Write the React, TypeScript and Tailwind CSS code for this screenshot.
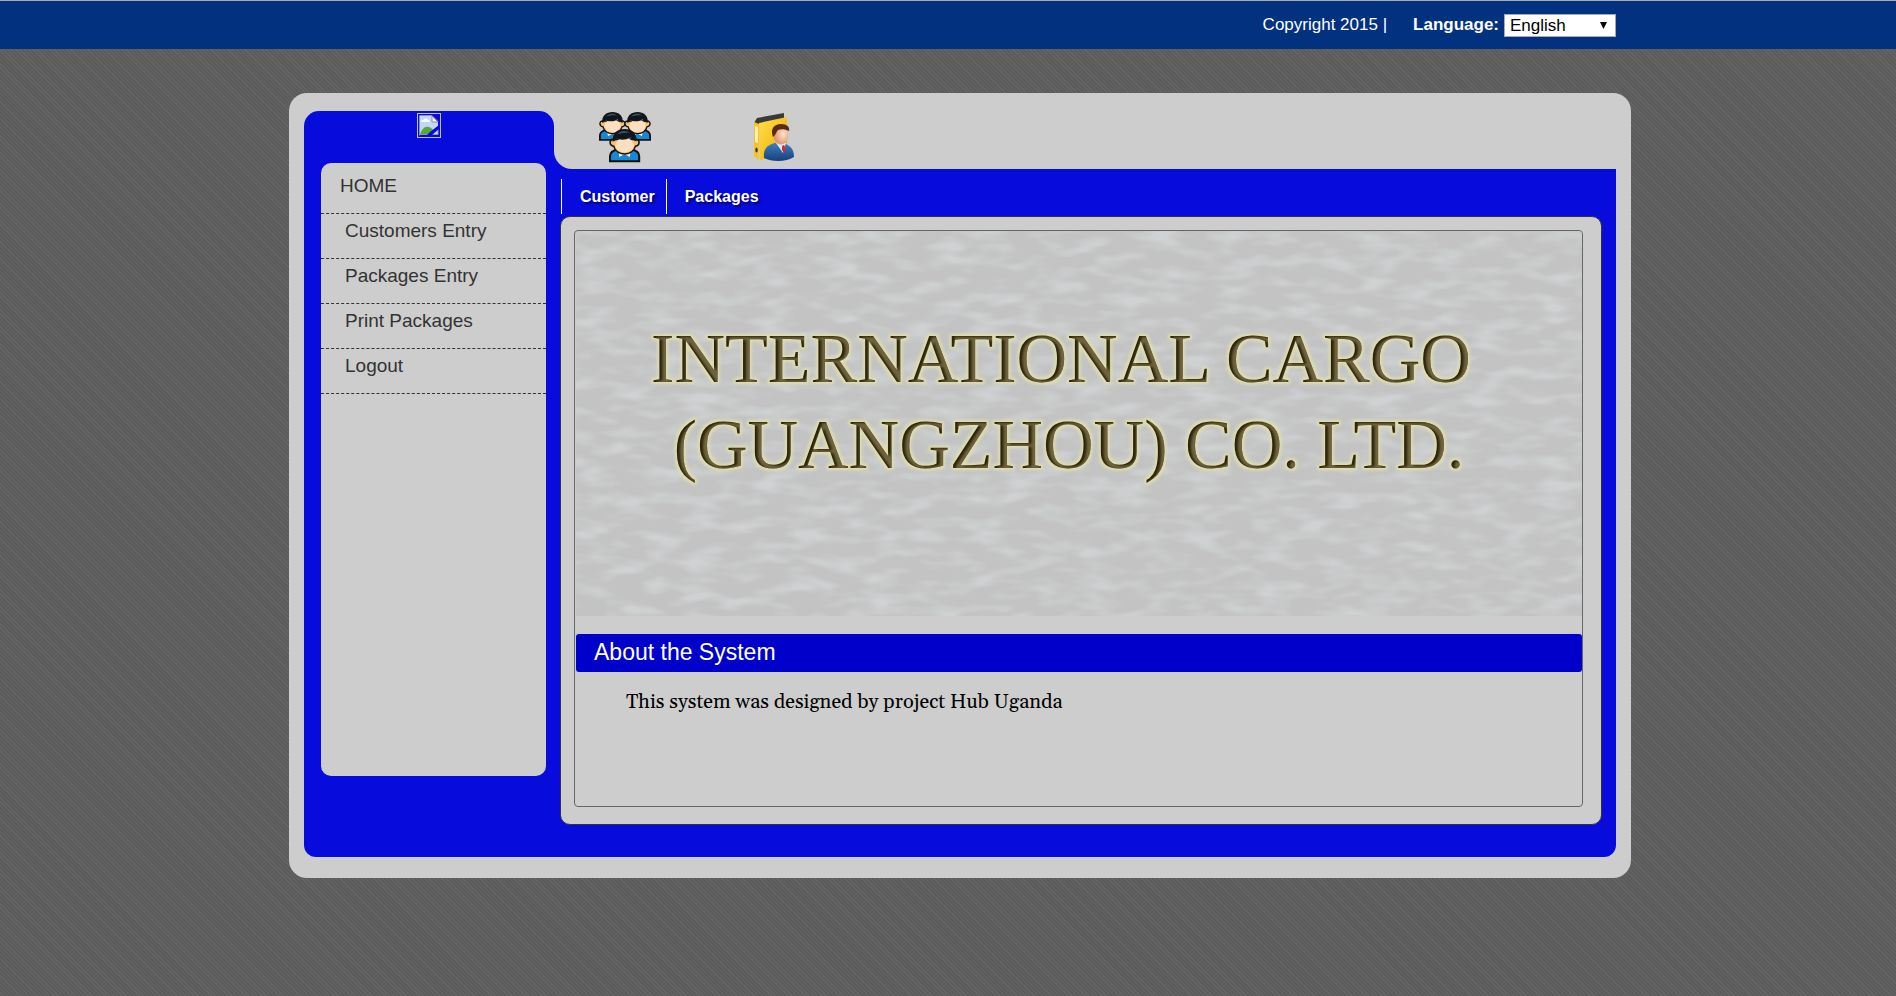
import { ReactNode } from "react";

const navItems = ["Customers Entry", "Packages Entry", "Print Packages", "Logout"];

function BrokenImageIcon() {
  return (
    <svg viewBox="0 0 24 25" className="h-[25px] w-6" role="img" aria-label="Logo">
      <rect x="0.5" y="0.5" width="23" height="24" fill="none" stroke="#c0c0c0" />
      <path d="M3 3h12l6 6v13H3z" fill="#c3d6f5" />
      <path d="M4 9c0-2 2-2 2.500-2 .5-2 4-2 4.500 0 2 0 2 2 2 2z" fill="#fff" />
      <path d="M3 21c2-5 5-8 8-7 3 0 4 2 5 3l-5 5H3z" fill="#55aa35" />
      <path d="M2.500 22.500v-20H15l6 6" fill="none" stroke="#8f9499" />
      <path d="M15 3v6h6z" fill="#f4f6fa" stroke="#8f9499" />
      <path d="M3 21.500h8M15 21.500h6V16" fill="none" stroke="#8f9499" />
      <path d="M10 22l3-3 9-7v4l-7 6z" fill="#070cdc" />
    </svg>
  );
}

function Person({ x, y, s }: { x: number; y: number; s: number }) {
  return (
    <g transform={`translate(${x} ${y}) scale(${s})`}>
      <path d="M1 31v-5c0-4 3-5.500 8-6.500h12c5 1 8 2.500 8 6.500v5z" fill="#1689d6" stroke="#111" strokeWidth="2" />
      <path d="M9 20l1 7 5-3 5 3 1-7-2-3h-8z" fill="#fff" />
      <path d="M11 18h8l-4 7z" fill="#f5b86f" />
      <path d="M4 10C0 10 0 16 4.500 16.500 6 22 11 24 15 24s9-2 10.500-7.500C30 16 30 10 26 10z" fill="#f9bd74" stroke="#111" strokeWidth="1.500" />
      <ellipse cx="15" cy="15.500" rx="9" ry="7" fill="#fee0c0" />
      <path d="M3.500 12C3 4 8 0 15 0s12 4 11.500 12c-3-1-5-2-6-4-4 3-10 3-13 1-1 2-2 3-4 3z" fill="#10171c" />
      <path d="M8 5c3-4 9-4 12-1-4-1-8 0-12 1z" fill="#3b5361" />
    </g>
  );
}

function CustomersIcon() {
  return (
    <svg viewBox="0 0 52 52" className="size-[52px]" aria-hidden="true">
      <Person x={0} y={1} s={0.9} />
      <Person x={25} y={1} s={0.9} />
      <Person x={10} y={18} s={1.04} />
    </svg>
  );
}

function PackagesIcon() {
  return (
    <svg viewBox="0 0 42 50" className="h-[50px] w-[42px]" aria-hidden="true">
      <defs>
        <linearGradient id="folder" x1="0" y1="0" x2="1" y2="1">
          <stop offset="0" stopColor="#ffe04a" />
          <stop offset="1" stopColor="#eda900" />
        </linearGradient>
        <linearGradient id="suit" x1="0" y1="0" x2="0" y2="1">
          <stop offset="0" stopColor="#3d7fc0" />
          <stop offset="1" stopColor="#164178" />
        </linearGradient>
        <radialGradient id="face" cx="0.65" cy="0.45" r="0.6">
          <stop offset="0" stopColor="#ffe3cf" />
          <stop offset="1" stopColor="#dd9468" />
        </radialGradient>
      </defs>
      <path d="M1 11l3-5 27-5v5L6 13z" fill="#3a3a3a" />
      <path d="M6 11l28-6v36L7 48z" fill="url(#folder)" />
      <path d="M1 10l5 2v36l-5-4z" fill="#f7c31c" />
      <path d="M2 14l3 1v16l-3-1z" fill="#fff2c0" />
      <ellipse cx="3.500" cy="38" rx="1.200" ry="2.500" fill="#333" />
      <path d="M11 46c-1-9 3-13 11-15h8c7 2 11 6 11 14-8 5-22 5-30 1z" fill="url(#suit)" />
      <path d="M23 31l7 10 3-10z" fill="#dfe7f3" />
      <path d="M29 34l2-1 2 4-2 4-2-3z" fill="#c0303f" />
      <ellipse cx="28" cy="23" rx="7.500" ry="9.500" fill="url(#face)" />
      <path d="M20 25c-3-8 1-13 8-13 6 0 9 3 8 7-4-2-8-2-11-1-2 2-2 5-5 7z" fill="#5b2c14" />
    </svg>
  );
}

function BannerTexture() {
  return (
    <svg className="absolute inset-0 size-full" aria-hidden="true">
      <filter id="texture" x="0" y="0" width="100%" height="100%" colorInterpolationFilters="sRGB">
        <feTurbulence type="fractalNoise" baseFrequency="0.028 0.08" numOctaves="2" seed="7" />
        <feColorMatrix values="0 0 0 0 0.812  0 0 0 0 0.820  0 0 0 0 0.824  3 0 0 0 -1.300" />
      </filter>
      <filter id="gilded" x="-5%" y="-10%" width="110%" height="120%" colorInterpolationFilters="sRGB">
        <feMorphology in="SourceAlpha" operator="dilate" radius="2" result="wide" />
        <feGaussianBlur in="wide" stdDeviation="1.800" result="soft" />
        <feFlood floodColor="#dfddb0" />
        <feComposite in2="soft" operator="in" result="glow" />
        <feOffset in="SourceAlpha" dx="3" dy="1" result="shifted" />
        <feGaussianBlur in="shifted" stdDeviation="0.800" result="inner" />
        <feFlood floodColor="#9c8d62" floodOpacity="0.600" />
        <feComposite in2="inner" operator="in" result="tint" />
        <feComposite in="tint" in2="SourceAlpha" operator="in" result="highlight" />
        <feMerge>
          <feMergeNode in="glow" />
          <feMergeNode in="SourceGraphic" />
          <feMergeNode in="highlight" />
        </feMerge>
      </filter>
      <rect width="100%" height="100%" fill="#c3c3c3" />
      <rect width="100%" height="100%" filter="url(#texture)" />
    </svg>
  );
}

function Tab({ children }: { children: ReactNode }) {
  return (
    <a
      href="#"
      className="flex h-[35px] items-center border-l border-white pr-[11px] pl-[18px] text-base font-bold text-white [text-shadow:2px_2px_2px_#000066]"
    >
      {children}
    </a>
  );
}

export default function App() {
  return (
    <div className="min-h-screen bg-[#5c5c5c] bg-[repeating-linear-gradient(45deg,#5c5c5c_0_2px,#656565_2px_3px)] pb-[118px] font-['Liberation_Sans',Arial,sans-serif] text-black">
      <header className="border-t border-[#a9a9a9] bg-[#02317f]">
        <div className="mx-auto flex h-12 w-full max-w-[1366px] items-center justify-end pr-[15px] text-[17px] text-white">
          <span className="mr-[26px]">Copyright 2015 |</span>
          <label htmlFor="language" className="mr-[5px] font-bold">
            Language:
          </label>
          <div className="relative">
            <select
              id="language"
              className="block h-[23px] w-28 appearance-none border border-[#a9a9a9] bg-white pl-[5px] text-[17px] leading-[21px] text-black"
            >
              <option>English</option>
            </select>
            <svg viewBox="0 0 7 7" className="pointer-events-none absolute top-2 right-[9px] size-[7px]" aria-hidden="true">
              <path d="M0 0h7L3.500 7z" />
            </svg>
          </div>
        </div>
      </header>

      <div className="mx-auto w-full max-w-[1366px] pt-11 pl-6">
        <div className="rounded-[18px] bg-[#cdcdcd] px-[15px] pt-[18px] pb-[21px]">
          <div className="flex">
            <aside className="w-[250px] shrink-0 rounded-t-[15px] rounded-bl-xl bg-[#070cdc] pb-[81px]">
              <div className="flex h-13 justify-center pt-[2px]">
                <BrokenImageIcon />
              </div>
              <nav className="mr-2 ml-[17px] min-h-[613px] rounded-[10px] bg-[#cdcdcd] text-[19px] leading-7 text-[#333]">
                <a href="#" className="block h-[51px] border-b border-dashed border-[#333] pt-[9px] pl-[19px]">
                  HOME
                </a>
                {navItems.map((item) => (
                  <a key={item} href="#" className="block h-[45px] border-b border-dashed border-[#333] pt-[3px] pl-6">
                    {item}
                  </a>
                ))}
              </nav>
            </aside>

            <div className="flex min-w-0 flex-1 flex-col">
              <div className="bg-[linear-gradient(to_top,#070cdc_20px,#cdcdcd_20px)]">
                <div className="flex h-[58px] rounded-bl-[18px] bg-[#cdcdcd]">
                  <a href="#" aria-label="Customers" className="ml-[45px]">
                    <CustomersIcon />
                  </a>
                  <a href="#" aria-label="Packages" className="ml-[102px] pt-px">
                    <PackagesIcon />
                  </a>
                </div>
              </div>

              <div className="flex-1 rounded-br-xl bg-[#070cdc] pt-[10px] pr-[14px] pl-[6px]">
                <nav className="flex pl-px">
                  <Tab>Customer</Tab>
                  <Tab>Packages</Tab>
                </nav>
                <main className="mt-[2px] rounded-[10px] border border-[#333] bg-[#cdcdcd] pt-[13px] pr-[18px] pb-[17px] pl-[13px]">
                  <div className="min-h-[577px] rounded border border-[#666] pl-px">
                    <div className="relative h-[385px] overflow-hidden rounded-t">
                      <BannerTexture />
                      <h1 className="relative pt-[85px] pr-9 text-center font-['Liberation_Serif','Times_New_Roman',serif] text-[70px] leading-[86px] text-[#2b240a] [filter:url(#gilded)]">
                        <span className="block">INTERNATIONAL CARGO</span>
                        <span className="block pl-4">(GUANGZHOU) CO. LTD.</span>
                      </h1>
                    </div>
                    <h2 className="mt-[18px] h-[38px] rounded-[3px] bg-[#0000cb] pl-[18px] text-[23px] leading-[36px] text-white">
                      About the System
                    </h2>
                    <p className="mt-[17px] pl-[50px] font-[Georgia,Gelasio,'Liberation_Serif',serif] text-[20px] leading-[26px]">
                      This system was designed by project Hub Uganda
                    </p>
                  </div>
                </main>
              </div>
            </div>
          </div>
        </div>
      </div>
    </div>
  );
}
